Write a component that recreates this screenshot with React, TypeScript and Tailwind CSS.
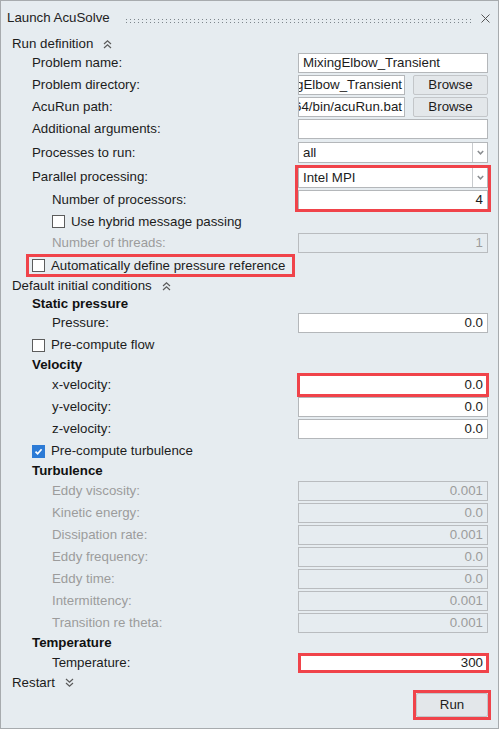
import React from "react";

const TXT = "text-[#1c1c1c]";
const GRAY = "text-[#9c9c9c]";
const FS = "text-[13.3px]";

function ChevUp() {
  return (
    <svg width="9" height="10" viewBox="0 0 9 10" className="ml-[10px]">
      <path d="M1 5 L4.5 1.8 L8 5 M1 9 L4.5 5.8 L8 9" stroke="#5a5a5a" strokeWidth="1.2" fill="none" />
    </svg>
  );
}

function ChevDown() {
  return (
    <svg width="9" height="10" viewBox="0 0 9 10" className="ml-[10px]">
      <path d="M1 1 L4.5 4.2 L8 1 M1 5 L4.5 8.2 L8 5" stroke="#5a5a5a" strokeWidth="1.2" fill="none" />
    </svg>
  );
}

function Field({
  value = "",
  right = false,
  disabled = false,
}: {
  value?: string;
  right?: boolean;
  disabled?: boolean;
}) {
  return (
    <div
      className={`h-[20px] w-[190px] border flex items-center px-[4px] ${FS} overflow-hidden whitespace-nowrap ${
        disabled ? "border-[#b9bcbf] bg-[#e6ecf0] text-[#9c9c9c]" : "border-[#b4b7ba] bg-white text-[#1c1c1c]"
      } ${right ? "justify-end" : ""}`}
    >
      {value}
    </div>
  );
}

function PathField({ value }: { value: string }) {
  return (
    <div className={`h-[20px] w-[107px] border border-[#b4b7ba] bg-white flex items-center justify-end pr-[2px] ${FS} overflow-hidden whitespace-nowrap text-[#1c1c1c]`}>
      <span className="shrink-0">{value}</span>
    </div>
  );
}

function Btn({ label, w = "w-[75px]", h = "h-[20px]" }: { label: string; w?: string; h?: string }) {
  return (
    <div
      className={`${w} ${h} border border-[#c3c6c9] rounded-[2px] bg-[#e3e7ea] flex items-center justify-center ${FS} text-[#1c1c1c]`}
    >
      {label}
    </div>
  );
}

function Select({ value }: { value: string }) {
  return (
    <div className="h-[21px] w-[190px] border border-[#b4b7ba] bg-white flex">
      <div className={`flex-1 flex items-center px-[4px] ${FS} text-[#1c1c1c]`}>{value}</div>
      <div className="w-[15px] border-l border-[#c8cbce] flex items-center justify-center">
        <svg width="7" height="5" viewBox="0 0 7 5">
          <path d="M0.8 1 L3.5 3.8 L6.2 1" stroke="#8a8d90" strokeWidth="1.5" fill="none" />
        </svg>
      </div>
    </div>
  );
}

function Check({ checked = false }: { checked?: boolean }) {
  return checked ? (
    <div className="w-[13px] h-[13px] bg-[#2c7bd6] flex items-center justify-center shrink-0">
      <svg width="9" height="9" viewBox="0 0 9 9">
        <path d="M1.5 4.6 L3.6 6.7 L7.6 2.2" stroke="white" strokeWidth="1.7" fill="none" />
      </svg>
    </div>
  ) : (
    <div className="w-[13px] h-[13px] border border-[#5c5c5c] bg-white shrink-0" />
  );
}

function Row({
  label,
  pl,
  h = "h-[22px]",
  gray = false,
  children,
}: {
  label: string;
  pl: string;
  h?: string;
  gray?: boolean;
  children?: React.ReactNode;
}) {
  return (
    <div className={`flex items-center justify-between ${h}`}>
      <span className={`${pl} ${FS} whitespace-nowrap ${gray ? GRAY : TXT}`}>{label}</span>
      {children}
    </div>
  );
}

function Header({ label, h, children }: { label: string; h: string; children?: React.ReactNode }) {
  return (
    <div className={`flex items-center ${h} pl-[11px]`}>
      <span className={`${FS} ${TXT}`}>{label}</span>
      {children}
    </div>
  );
}

function Bold({ label, h }: { label: string; h: string }) {
  return (
    <div className={`flex items-center ${h} pl-[31px]`}>
      <span className={`${FS} font-bold text-[#111]`}>{label}</span>
    </div>
  );
}

function CheckRow({ label, checked, pl, h = "h-[22px]" }: { label: string; checked?: boolean; pl: string; h?: string }) {
  return (
    <div className={`flex items-center ${h} ${pl}`}>
      <Check checked={checked} />
      <span className={`ml-[6px] ${FS} ${TXT}`}>{label}</span>
    </div>
  );
}

const Red = ({ cls }: { cls: string }) => (
  <div className={`absolute border-[3px] border-[#f0434a] pointer-events-none ${cls}`} />
);

export default function App() {
  return (
    <div className="w-[500px] h-[730px] bg-white font-['Liberation_Sans',Arial,sans-serif]">
      <div className="w-[499px] h-[729px] border border-[#a7abae] bg-[#e6ecf0] flex flex-col">
        {/* Title */}
        <div className="flex items-center h-[34px] pl-[6px] pr-[8px]">
          <span className={`${FS} text-[#222]`}>Launch AcuSolve</span>
          <svg className="flex-1 h-[4px] mt-[6px] ml-[16px] mr-[8px]">
            <defs>
              <pattern id="grip" width="4" height="3" patternUnits="userSpaceOnUse">
                <rect width="1" height="1" fill="#7d868c" />
              </pattern>
            </defs>
            <rect width="100%" height="100%" fill="url(#grip)" />
          </svg>
          <svg width="9" height="9" viewBox="0 0 9 9">
            <path d="M0.5 0.5 L8.5 8.5 M8.5 0.5 L0.5 8.5" stroke="#555" strokeWidth="1" fill="none" />
          </svg>
        </div>

        <div className="flex flex-col pr-[10px]">
          <Header label="Run definition" h="h-[17px]">
            <ChevUp />
          </Header>
          <Row label="Problem name:" pl="pl-[31px]">
            <Field value="MixingElbow_Transient" />
          </Row>
          <Row label="Problem directory:" pl="pl-[31px]">
            <div className="flex w-[190px] justify-between">
              <PathField value="ngElbow_Transient" />
              <Btn label="Browse" />
            </div>
          </Row>
          <Row label="AcuRun path:" pl="pl-[31px]">
            <div className="flex w-[190px] justify-between">
              <PathField value="64/bin/acuRun.bat" />
              <Btn label="Browse" />
            </div>
          </Row>
          <Row label="Additional arguments:" pl="pl-[31px]">
            <Field />
          </Row>
          <Row label="Processes to run:" pl="pl-[31px]" h="h-[25px]">
            <Select value="all" />
          </Row>
          <div className="relative flex flex-col">
            <Row label="Parallel processing:" pl="pl-[31px]" h="h-[23px]">
              <div className="mt-[2px]">
                <Select value="Intel MPI" />
              </div>
            </Row>
            <Row label="Number of processors:" pl="pl-[51px]" h="h-[23px]">
              <Field value="4" right />
            </Row>
            <Red cls="-right-[3px] w-[196px] top-0 -bottom-[1px]" />
          </div>
          <CheckRow label="Use hybrid message passing" pl="pl-[51px]" h="h-[21px]" />
          <Row label="Number of threads:" pl="pl-[51px]" gray>
            <Field value="1" right disabled />
          </Row>
          <div className="flex items-center h-[23px] pl-[31px]">
            <div className="relative flex items-center h-full">
              <Check />
              <span className={`ml-[6px] ${FS} ${TXT}`}>Automatically define pressure reference</span>
              <Red cls="-left-[6px] -right-[10px] top-0 bottom-0" />
            </div>
          </div>

          <Header label="Default initial conditions" h="h-[18px]">
            <ChevUp />
          </Header>
          <Bold label="Static pressure" h="h-[17px]" />
          <Row label="Pressure:" pl="pl-[51px]">
            <Field value="0.0" right />
          </Row>
          <CheckRow label="Pre-compute flow" pl="pl-[31px]" />
          <Bold label="Velocity" h="h-[18px]" />
          <Row label="x-velocity:" pl="pl-[51px]">
            <div className="relative">
              <Field value="0.0" right />
              <Red cls="-inset-x-[1px] -inset-y-[2px]" />
            </div>
          </Row>
          <Row label="y-velocity:" pl="pl-[51px]">
            <Field value="0.0" right />
          </Row>
          <Row label="z-velocity:" pl="pl-[51px]">
            <Field value="0.0" right />
          </Row>
          <CheckRow label="Pre-compute turbulence" pl="pl-[31px]" checked />
          <Bold label="Turbulence" h="h-[18px]" />
          <Row label="Eddy viscosity:" pl="pl-[51px]" gray>
            <Field value="0.001" right disabled />
          </Row>
          <Row label="Kinetic energy:" pl="pl-[51px]" gray>
            <Field value="0.0" right disabled />
          </Row>
          <Row label="Dissipation rate:" pl="pl-[51px]" gray>
            <Field value="0.001" right disabled />
          </Row>
          <Row label="Eddy frequency:" pl="pl-[51px]" gray>
            <Field value="0.0" right disabled />
          </Row>
          <Row label="Eddy time:" pl="pl-[51px]" gray>
            <Field value="0.0" right disabled />
          </Row>
          <Row label="Intermittency:" pl="pl-[51px]" gray>
            <Field value="0.001" right disabled />
          </Row>
          <Row label="Transition re theta:" pl="pl-[51px]" gray>
            <Field value="0.001" right disabled />
          </Row>
          <Bold label="Temperature" h="h-[18px]" />
          <Row label="Temperature:" pl="pl-[51px]">
            <div className="relative">
              <Field value="300" right />
              <Red cls="inset-0 -right-[1px]" />
            </div>
          </Row>
          <Header label="Restart" h="h-[18px]">
            <ChevDown />
          </Header>
          <div className="flex justify-end mt-[1px]">
            <div className="relative">
              <Btn label="Run" w="w-[72px]" h="h-[24px]" />
              <Red cls="-inset-[3px]" />
            </div>
          </div>
        </div>
      </div>
    </div>
  );
}
